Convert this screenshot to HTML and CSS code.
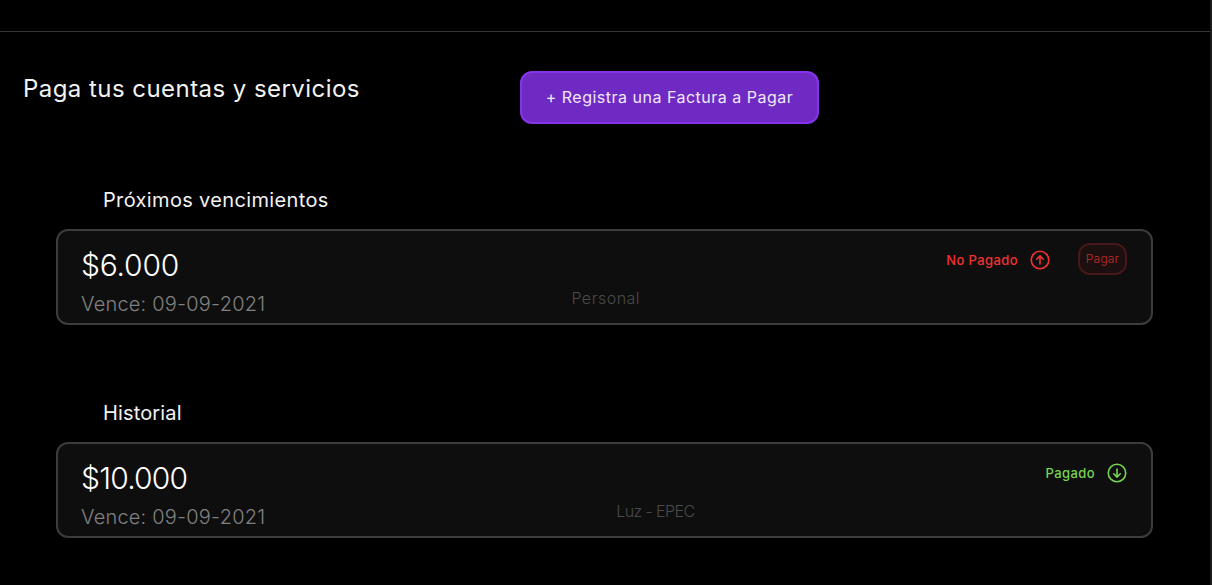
FILE: index.html
```html
<!DOCTYPE html>
<html lang="es">
<head>
<meta charset="utf-8">
<title>Paga tus cuentas y servicios</title>
<link rel="stylesheet" href="styles.css">
</head>
<body>
<main class="page">
  <div class="topbar"></div>
  <header class="header">
    <h1 class="title">Paga tus cuentas y servicios</h1>
    <button class="register">+ Registra una Factura a Pagar</button>
  </header>
  <section class="section">
    <h2 class="section-title upcoming">Próximos vencimientos</h2>
    <article class="card">
      <div class="info">
        <p class="amount six">$6.000</p>
        <p class="due">Vence: 09-09-2021</p>
      </div>
      <p class="category personal">Personal</p>
      <div class="status unpaid">
        <span class="status-label">No Pagado</span>
        <svg class="icon" viewBox="0 0 20 20"><circle cx="10" cy="10" r="8.75"/><path d="M10 14V6M6.7 9.2L10 5.9l3.3 3.3"/></svg>
        <button class="pay">Pagar</button>
      </div>
    </article>
  </section>
  <section class="section">
    <h2 class="section-title history">Historial</h2>
    <article class="card">
      <div class="info">
        <p class="amount ten">$10.000</p>
        <p class="due">Vence: 09-09-2021</p>
      </div>
      <p class="category service">Luz - EPEC</p>
      <div class="status paid">
        <span class="status-label">Pagado</span>
        <svg class="icon" viewBox="0 0 20 20"><circle cx="10" cy="10" r="8.75"/><path d="M10 6v8M6.7 10.8l3.3 3.3 3.3-3.3"/></svg>
      </div>
    </article>
  </section>
</main>
</body>
</html>
```
FILE: styles.css
```css
* { box-sizing: border-box; }
body {
  margin: 0;
  background: #000;
  color: #f2f2f2;
  font-family: Inter, "Open Sans", sans-serif;
  overflow: hidden;
}
h1, h2, p { margin: 0; font-weight: 300; white-space: nowrap; }
button { font-family: inherit; padding: 0; white-space: nowrap; }
.page { height: 585px; border-right: 2px solid #1a1a1a; }
.topbar { height: 32px; border-bottom: 1px solid #383838; }
.header { display: flex; padding: 39px 0 0 23px; height: 148px; }
.title { width: 497px; font-size: 24px; font-weight: 400; line-height: 36px; letter-spacing: 0.45px; }
.register {
  width: 299px;
  height: 53px;
  border: 2px solid #8634ec;
  border-radius: 12px;
  background: #6f2ac4;
  color: #f0e8fa;
  font-size: 16px;
  font-weight: 400;
  letter-spacing: 0.5px;
  padding-bottom: 2px;
}
.section { height: 213px; padding: 5px 57px 0 56px; }
.section-title { padding-left: 47px; height: 44px; font-size: 20px; font-weight: 400; line-height: 30px; }
.upcoming { letter-spacing: 0.35px; }
.history { letter-spacing: 0.15px; }
.card {
  display: flex;
  justify-content: space-between;
  height: 96px;
  padding: 0 24px 0 23px;
  border: 2px solid #3c3c3c;
  border-radius: 12px;
  background: #0e0e0e;
}
.info { padding-top: 12px; }
.amount { font-size: 30px; line-height: 44px; color: #fff; }
.six { letter-spacing: -0.2px; }
.ten { letter-spacing: -0.8px; }
.due { padding-top: 1px; font-size: 20px; line-height: 32px; letter-spacing: 0.2px; color: #808080; }
.category { padding-top: 55px; font-size: 16px; line-height: 24px; color: #4a4a4a; }
.personal { letter-spacing: 0.5px; }
.service { letter-spacing: -0.6px; }
.status { display: flex; height: 57px; align-items: center; }
.status-label { font-size: 13px; font-weight: 500; line-height: 20px; letter-spacing: 0.4px; white-space: nowrap; }
.icon { width: 20px; height: 20px; margin-left: 12px; fill: none; stroke: currentColor; stroke-width: 1.6; stroke-linecap: round; stroke-linejoin: round; }
.unpaid { color: #f03232; }
.paid { color: #77d353; }
.pay {
  width: 49px;
  height: 32px;
  margin: 0 0 1px 28px;
  padding-bottom: 2px;
  border: 2px solid #481719;
  border-radius: 12px;
  background: #1b0f0f;
  color: #c22c2d;
  font-size: 12px;
  font-weight: 300;
  letter-spacing: 0.2px;
}
```
